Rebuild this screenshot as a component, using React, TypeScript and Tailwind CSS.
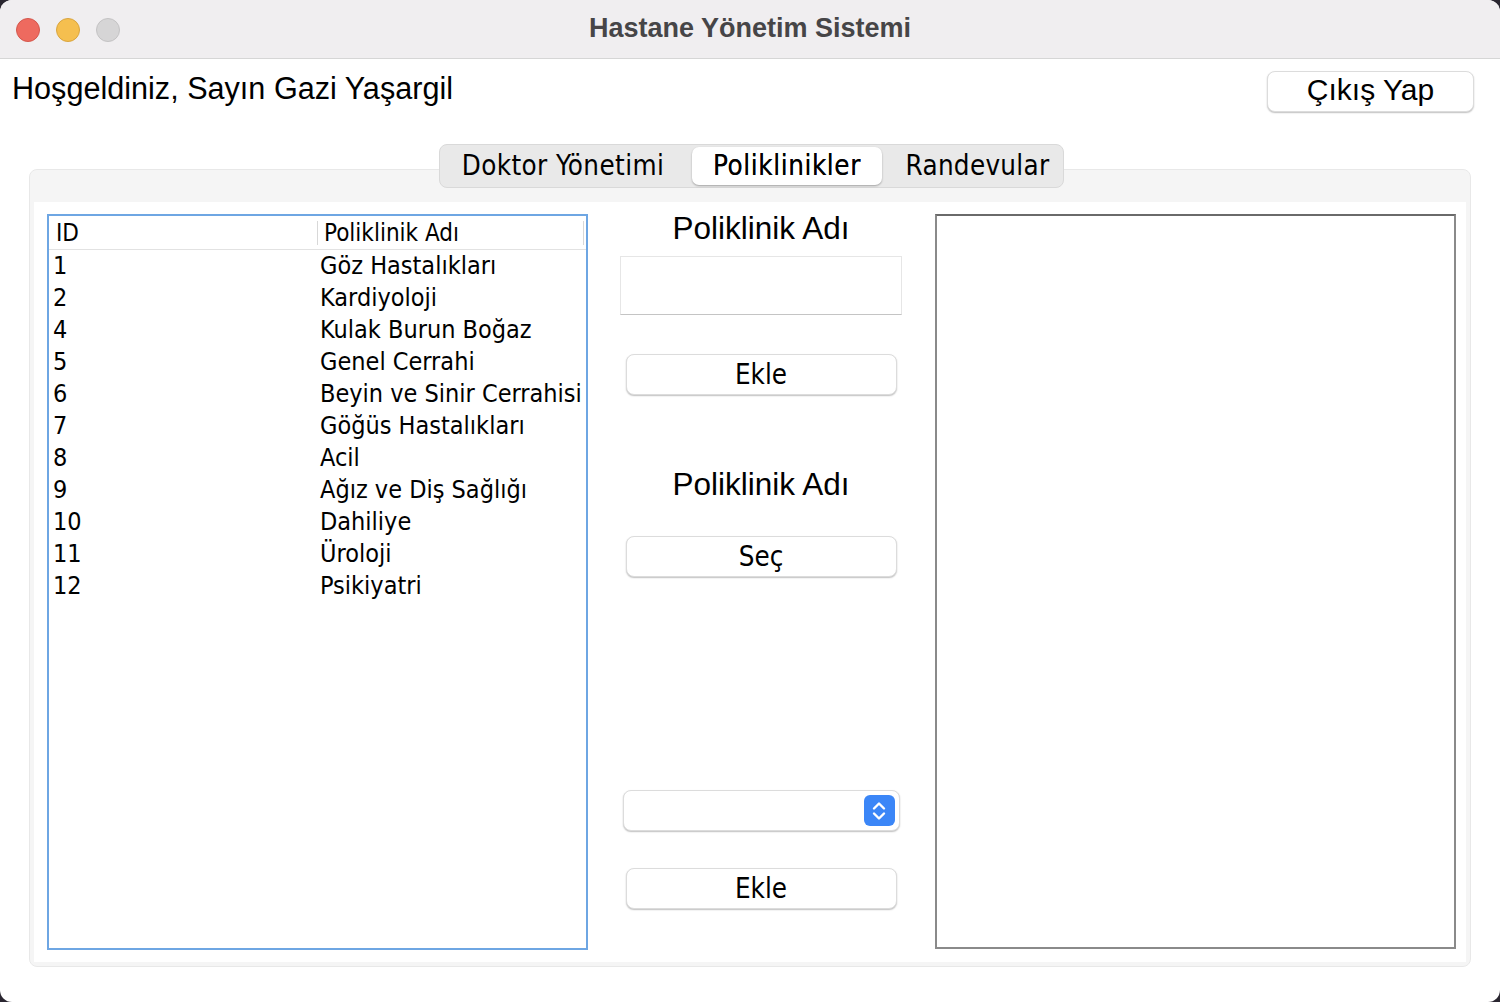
import React from "react";

const rows: [string, string][] = [
  ["1", "Göz Hastalıkları"],
  ["2", "Kardiyoloji"],
  ["4", "Kulak Burun Boğaz"],
  ["5", "Genel Cerrahi"],
  ["6", "Beyin ve Sinir Cerrahisi"],
  ["7", "Göğüs Hastalıkları"],
  ["8", "Acil"],
  ["9", "Ağız ve Diş Sağlığı"],
  ["10", "Dahiliye"],
  ["11", "Üroloji"],
  ["12", "Psikiyatri"],
];

const geo = { fontFamily: '"Liberation Sans", Arial, sans-serif' };
const luc = { fontFamily: '"DejaVu Sans Condensed", "DejaVu Sans", sans-serif' };

function MacButton({ children, className = "" }: { children: React.ReactNode; className?: string }) {
  return (
    <div
      className={
        "flex items-center justify-center rounded-[8px] bg-white border border-[#dcdcdc] shadow-[0_1px_1.5px_rgba(0,0,0,0.25)] text-black " +
        className
      }
    >
      {children}
    </div>
  );
}

export default function App() {
  return (
    <div className="w-[1500px] h-[1002px] bg-[#2a2630] overflow-hidden">
      <div className="w-full h-full bg-white rounded-[12px] overflow-hidden flex flex-col">
        {/* Title bar */}
        <div className="h-[59px] shrink-0 bg-[#f0eef0] border-b border-[#d6d6d6] relative flex items-center justify-center">
          <div className="absolute left-[16px] top-[18px] flex gap-[16px]">
            <div className="w-[24px] h-[24px] rounded-full bg-[#ee6a5f] border border-[#d4574d]" />
            <div className="w-[24px] h-[24px] rounded-full bg-[#f5bf4f] border border-[#d9a53f]" />
            <div className="w-[24px] h-[24px] rounded-full bg-[#d6d5d6] border border-[#c4c3c4]" />
          </div>
          <div className="text-[27px] font-bold text-[#464547] mt-[-2px]" style={{ fontFamily: '"Liberation Sans", Arial, sans-serif' }}>
            Hastane Yönetim Sistemi
          </div>
        </div>

        {/* Header row */}
        <div className="flex justify-between items-start px-[12px] pt-[12px] h-[84px] shrink-0">
          <div className="text-[30.6px] text-black leading-[34px]" style={geo}>
            Hoşgeldiniz, Sayın Gazi Yaşargil
          </div>
          <MacButton className="w-[207px] h-[41px] mr-[14px] text-[30px]">
            <span style={geo} className="leading-none mt-[-4px]">Çıkış Yap</span>
          </MacButton>
        </div>

        {/* Tabbed panel */}
        <div className="relative mx-[29px] mt-[26px] h-[798px] rounded-[8px] bg-[#f5f5f5] border border-[#e8e8e8] px-[4px] pt-[32px] pb-[4px]">
          <div className="absolute left-[409px] top-[-26px] h-[44px] w-[625px] rounded-[8px] bg-[#e9e9e9] border border-[#d9d9d9] flex items-center px-[2px] text-[27.5px] text-black" style={luc}>
            <div className="w-[242px] h-[38px] flex items-center justify-center tracking-[0.4px]">Doktor Yönetimi</div>
            <div className="w-[190px] ml-[8px] h-[38px] flex items-center justify-center rounded-[7px] bg-white shadow-[0_1px_2px_rgba(0,0,0,0.3)] tracking-[0.6px] [text-shadow:0_0_0.6px_rgba(0,0,0,0.8)]">
              Poliklinikler
            </div>
            <div className="flex-1 h-[38px] flex items-center justify-center pl-[12px] tracking-[0.3px]">Randevular</div>
          </div>

          <div className="bg-white h-full flex pt-[12px] pl-[13px] pr-[10px] pb-[13px]">
            {/* Table */}
            <div className="w-[541px] h-[736px] shrink-0 border-2 border-[#6ea6e3] flex flex-col" style={luc}>
              <div className="h-[34px] flex border-b border-[#e2e2e2] text-[24px] items-center">
                <div className="w-[269px] pl-[7px] border-r border-[#d8d8d8] h-[24px] leading-[24px]">ID</div>
                <div className="flex-1 pl-[6px] h-[24px] leading-[24px] border-r border-[#d8d8d8] mr-[2px]">Poliklinik Adı</div>
              </div>
              {rows.map(([id, name]) => (
                <div key={id} className="h-[32px] flex items-center text-[25px] text-black">
                  <div className="w-[271px] shrink-0 pl-[4px]">{id}</div>
                  <div className="flex-1 whitespace-nowrap">{name}</div>
                </div>
              ))}
            </div>

            {/* Middle column */}
            <div className="w-[282px] shrink-0 ml-[32px] flex flex-col items-center">
              <div className="text-[31.5px] mt-[-4px] leading-[36px]" style={geo}>Poliklinik Adı</div>
              <div className="w-[282px] h-[59px] mt-[10px] bg-white border border-[#e6e6e6] border-b-[#c4c4c4]" />
              <MacButton className="w-[271px] h-[41px] mt-[39px] text-[27.5px]">
                <span style={luc}>Ekle</span>
              </MacButton>
              <div className="text-[31.5px] mt-[71px] leading-[36px]" style={geo}>Poliklinik Adı</div>
              <MacButton className="w-[271px] h-[41px] mt-[34px] text-[27.5px]">
                <span style={luc}>Seç</span>
              </MacButton>
              <div className="w-[277px] h-[41px] mt-[213px] rounded-[8px] bg-white border border-[#dcdcdc] shadow-[0_1px_1.5px_rgba(0,0,0,0.25)] flex items-center justify-end pr-[4px]">
                <div className="w-[31px] h-[31px] rounded-[6px] bg-[#3b86f7] flex items-center justify-center">
                  <svg width="18" height="24" viewBox="0 0 18 24" fill="none" stroke="white" strokeWidth="2.4" strokeLinecap="round" strokeLinejoin="round">
                    <path d="M4 9.5 L9 4.5 L14 9.5" />
                    <path d="M4 14.5 L9 19.5 L14 14.5" />
                  </svg>
                </div>
              </div>
              <MacButton className="w-[271px] h-[41px] mt-[37px] text-[27.5px]">
                <span style={luc}>Ekle</span>
              </MacButton>
            </div>

            {/* Right panel */}
            <div className="w-[521px] h-[735px] shrink-0 ml-[33px] border-2 border-[#8a8a8a] border-t-[#6a6a6a]" />
          </div>
        </div>
      </div>
    </div>
  );
}
